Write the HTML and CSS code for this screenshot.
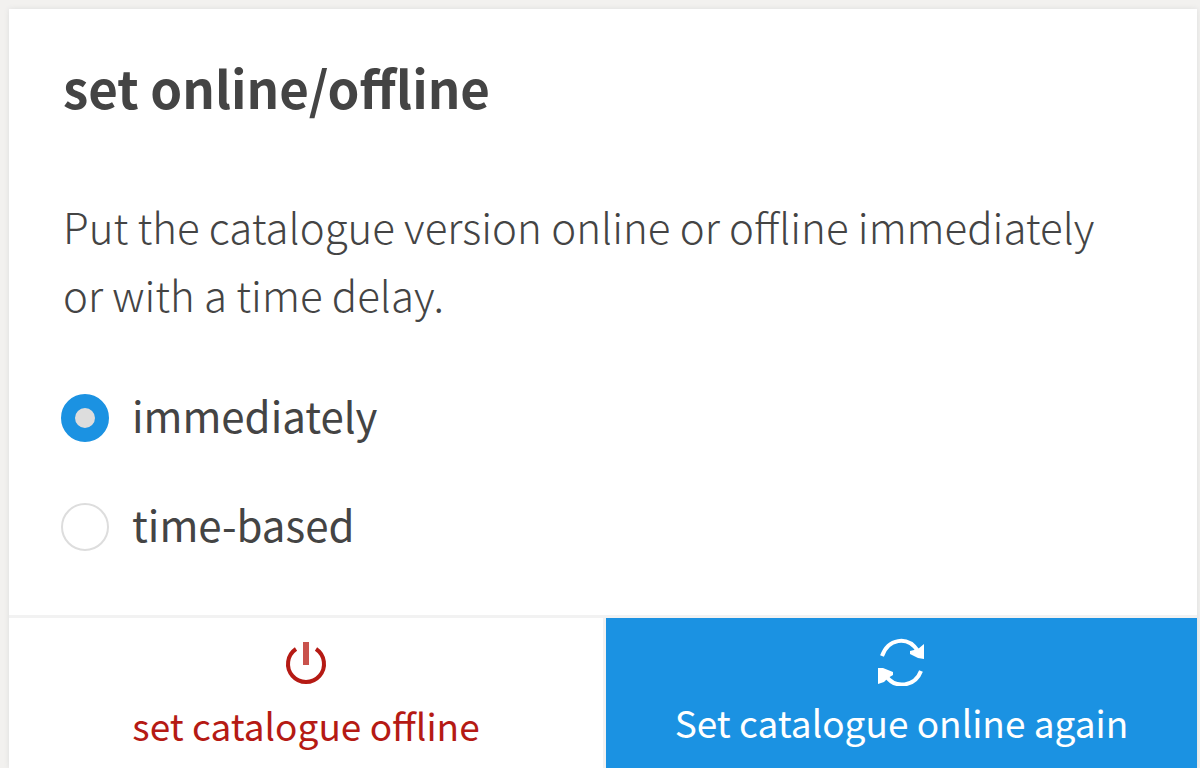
FILE: index.html
```html
<!DOCTYPE html>
<html lang="en">
<head>
  <meta charset="UTF-8" />
  <meta name="viewport" content="width=device-width, initial-scale=1.0"/>
  <title>set online/offline</title>
  <link rel="stylesheet" href="styles.css">
</head>
<body>
  <main class="card">
    <form class="card-form">
      <div class="card-body">
        <h1>set online/offline</h1>
        <p>Put the catalogue version online or offline immediately or with a time delay.</p>

        <div class="options">
          <div class="option">
            <input type="radio" name="timing" id="immediately" checked>
            <label for="immediately">immediately</label>
          </div>
          <div class="option">
            <input type="radio" name="timing" id="timeBased">
            <label for="timeBased">time-based</label>
          </div>
        </div>
      </div>

      <div class="actions">
        <button type="button" class="action offline">
          <svg class="icon" viewBox="0 0 48 48" aria-hidden="true">
            <path d="M14 11A18 18 0 1 0 34 11" fill="none" stroke="currentColor" stroke-width="4"/>
            <path d="M24 4V27" fill="none" stroke="#c9524c" stroke-width="6"/>
          </svg>
          <span>set catalogue offline</span>
        </button>
        <button type="button" class="action online">
          <svg class="icon" viewBox="0 0 48 48" aria-hidden="true">
            <path d="M4 18C10 1 29 -3 40 13" fill="none" stroke="currentColor" stroke-width="4"/>
            <path d="M46 6V21L40 20L32 16V13L40 11Z" fill="currentColor"/>
            <path d="M43 33C37 49 17 51 8 38" fill="none" stroke="currentColor" stroke-width="4"/>
            <path d="M0 30H5L15 34V37L10 40L6 44L0 46Z" fill="currentColor"/>
          </svg>
          <span>Set catalogue online again</span>
        </button>
      </div>
    </form>
  </main>
</body>
</html>
```
FILE: styles.css
```css
body {
  font-family: "Noto Sans CJK SC", "Noto Sans", sans-serif;
  margin: 0;
  padding: 9px 3px 0 9px;
  background: #f2f1ef;
  color: #444;
}
.card {
  background: white;
  box-shadow: 0 0 5px #ddd;
}
.card-body {
  padding: 44px 54px 54px;
}
h1 {
  margin: 0 0 71px;
  font-size: 51px;
  line-height: 68px;
  font-weight: 700;
}
p {
  margin: 0 0 56px;
  font-size: 42px;
  line-height: 68px;
  font-weight: 300;
}
.options {
  display: flex;
  flex-direction: column;
  gap: 41px;
}
.option {
  display: flex;
  align-items: center;
  gap: 23px;
  font-size: 42px;
}
.option input {
  appearance: none;
  box-sizing: border-box;
  width: 48px;
  height: 48px;
  margin: 0 0 0 -2px;
  border: 2px solid #ddd;
  border-radius: 50%;
  background: white;
  cursor: pointer;
}
.option input:checked {
  border: 14px solid #1b92e2;
  background: #ddd;
}
.option label {
  padding-bottom: 6px;
  line-height: 62px;
  cursor: pointer;
}
.actions {
  display: flex;
  border-top: 3px solid #f2f2f2;
}
.action {
  width: 50%;
  display: flex;
  flex-direction: column;
  align-items: center;
  gap: 9px;
  padding: 20px 0 13px;
  border: none;
  background: white;
  font-family: inherit;
  font-size: 37px;
  line-height: 60px;
  cursor: pointer;
}
.offline {
  color: #b51a14;
}
.online {
  gap: 6px;
  border-left: 3px solid #f2f2f2;
  background: #1b92e2;
  color: white;
}
.icon {
  width: 48px;
  height: 48px;
}
```
